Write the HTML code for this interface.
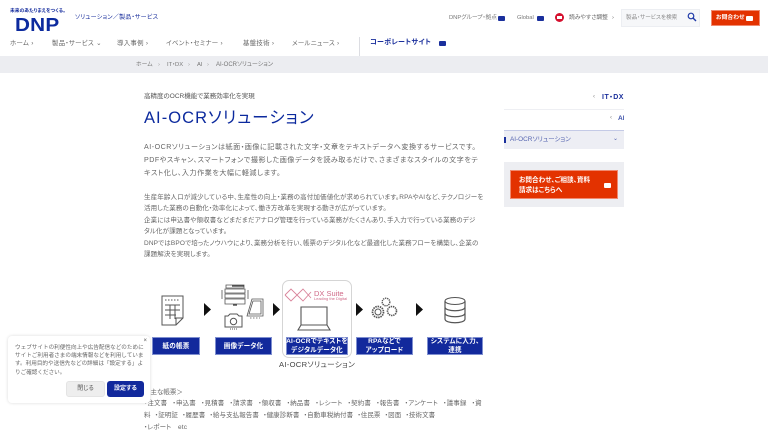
<!DOCTYPE html>
<html lang="ja"><head><meta charset="utf-8"><title>AI-OCRソリューション</title>
<style>
html,body{margin:0;padding:0;background:#fff}
#p{position:relative;width:768px;height:432px;overflow:hidden;background:#fff;font-family:"Liberation Sans","Noto Sans CJK JP",sans-serif;color:#555;font-feature-settings:"palt"}
.t{position:absolute;white-space:nowrap;line-height:1.2}
.b{position:absolute}
.ext{position:absolute;width:7px;height:5px;background:#1a2f9c;border-radius:1px}
.nav{font-size:6.4px;color:#666;top:40px;letter-spacing:.3px}
.body1{font-size:7.1px;left:144px;color:#666;letter-spacing:.5px}
.body2{font-size:6.5px;left:144px;color:#666;letter-spacing:.14px}
.lab{position:absolute;background:#12299c;border:1px solid #7f8fd0;box-sizing:border-box;color:#fff;font-size:6.6px;font-weight:bold;text-align:center;line-height:9px;padding-top:0;display:flex;align-items:center;justify-content:center;white-space:nowrap;letter-spacing:.2px}
</style></head><body><div id="p">
<div class="t" style="left:10px;top:9px;font-size:4.8px;color:#12299c;font-weight:bold">未来のあたりまえをつくる。</div>
<div class="t" style="left:15px;top:14px;font-size:18.5px;font-weight:bold;color:#0c2a9e;letter-spacing:.2px;transform:scaleX(1.12);transform-origin:left top">DNP</div>
<div class="t" style="left:75px;top:14.5px;font-size:6px;color:#1a2f9c;letter-spacing:.25px">ソリューション／製品・サービス</div>

<div class="t" style="left:449px;top:15px;font-size:5.8px;color:#777">DNPグループ・拠点</div><div class="ext" style="left:498px;top:16px"></div>
<div class="t" style="left:517px;top:15px;font-size:5.8px;color:#777">Global</div><div class="ext" style="left:537px;top:16px"></div>
<div class="b" style="left:555px;top:13px;width:9px;height:9px;border-radius:50%;background:#d5102e"></div>
<div class="b" style="left:557px;top:16px;width:5px;height:3px;background:#fff"></div>
<div class="t" style="left:569px;top:15px;font-size:5.8px;color:#666">読みやすさ調整</div>
<div class="t" style="left:612px;top:15px;font-size:5.8px;color:#666">›</div>
<div class="b" style="left:621px;top:9px;width:79px;height:18px;background:#f6f7f9;border:1px solid #eceef2;box-sizing:border-box"></div>
<div class="t" style="left:626px;top:15px;font-size:5.6px;color:#888">製品・サービスを検索</div>
<svg class="b" style="left:687px;top:12px" width="10" height="10" viewBox="0 0 10 10"><circle cx="4" cy="4" r="2.8" fill="none" stroke="#1f3aa8" stroke-width="1.2"/><path d="M6 6l3 3" stroke="#1f3aa8" stroke-width="1.4"/></svg>
<div class="b" style="left:711px;top:9.500px;width:49px;height:16.500px;background:#e33200;border:1px solid #f08a70;box-sizing:border-box"></div>
<div class="t" style="left:716px;top:15px;font-size:5.8px;font-weight:bold;color:#fff">お問合わせ</div><div class="ext" style="left:746px;top:16px;background:#fff"></div>

<div class="t nav" style="left:10px">ホーム ›</div>
<div class="t nav" style="left:52px">製品・サービス ⌄</div>
<div class="t nav" style="left:117px">導入事例 ›</div>
<div class="t nav" style="left:166px">イベント・セミナー ›</div>
<div class="t nav" style="left:243px">基盤技術 ›</div>
<div class="t nav" style="left:292px">メールニュース ›</div>
<div class="b" style="left:359px;top:37px;width:1px;height:19px;background:#dcdde2"></div>
<div class="t" style="left:370px;top:39px;font-size:7px;font-weight:bold;color:#1a2f9c;letter-spacing:.3px">コーポレートサイト</div><div class="ext" style="left:439px;top:41px"></div>

<div class="b" style="left:0;top:56px;width:768px;height:17px;background:#ecedf1"></div>
<div class="t" style="left:136px;top:61.500px;font-size:5.8px;color:#777">ホーム</div>
<div class="t" style="left:158px;top:61.500px;font-size:5.8px;color:#999">›</div>
<div class="t" style="left:167px;top:61.500px;font-size:5.8px;color:#777">IT・DX</div>
<div class="t" style="left:188px;top:61.500px;font-size:5.8px;color:#999">›</div>
<div class="t" style="left:197px;top:61.500px;font-size:5.8px;color:#777">AI</div>
<div class="t" style="left:207px;top:61.500px;font-size:5.8px;color:#999">›</div>
<div class="t" style="left:216px;top:61.500px;font-size:6px;color:#777">AI-OCRソリューション</div>

<div class="t" style="left:144px;top:92.500px;font-size:6.500px;color:#555">高精度のOCR機能で業務効率化を実現</div>
<div class="t" style="left:144px;top:108.500px;font-size:16.500px;color:#0c2a9e;letter-spacing:1.05px">AI-OCRソリューション</div>

<div class="t body1" style="top:143px">AI-OCRソリューションは紙面・画像に記載された文字・文章をテキストデータへ変換するサービスです。</div>
<div class="t body1" style="top:156px">PDFやスキャン、スマートフォンで撮影した画像データを読み取るだけで、さまざまなスタイルの文字をテ</div>
<div class="t body1" style="top:169px">キスト化し、入力作業を大幅に軽減します。</div>

<div class="t body2" style="top:193.500px">生産年齢人口が減少している中、生産性の向上・業務の高付加価値化が求められています。RPAやAIなど、テクノロジーを</div>
<div class="t body2" style="top:205px">活用した業務の自動化・効率化によって、働き方改革を実現する動きが広がっています。</div>
<div class="t body2" style="top:216.500px">企業には申込書や領収書などまだまだアナログ管理を行っている業務がたくさんあり、手入力で行っている業務のデジ</div>
<div class="t body2" style="top:228px">タル化が課題となっています。</div>
<div class="t body2" style="top:239.500px">DNPではBPOで培ったノウハウにより、業務分析を行い、帳票のデジタル化など最適化した業務フローを構築し、企業の</div>
<div class="t body2" style="top:251px">課題解決を実現します。</div>

<!-- diagram -->
<svg class="b" style="left:140px;top:275px" width="350" height="60" viewBox="0 0 350 60" fill="none" stroke="#555" stroke-width="1">
<path d="M22 21h21v22l-7 7H22zM36 50v-7h7M25 30h15M25 35h15M25 40h11M30 30v14M35 30v14"/>
<path d="M25 25h15" stroke-dasharray="1.5 1.5"/>
<path d="M64 28l7 6.500-7 6.500z" fill="#111" stroke="none"/>
<path d="M133 28l7 6.500-7 6.500z" fill="#111" stroke="none"/>
<path d="M216 28l7 6.500-7 6.500z" fill="#111" stroke="none"/>
<path d="M276 28l7 6.500-7 6.500z" fill="#111" stroke="none"/>
<path d="M86 10h18v3H86zM85 14h20v4H85zM85 19h20v4H85zM85 24h20v5H85z" stroke-width=".8"/>
<path d="M92 11h12M93 30h4" stroke="#333" stroke-width="1.200"/>
<path d="M82 15v9M108 15v9" stroke-width=".8"/>
<path d="M107 41l5-17h11v17zM109 39l4-13h8v13z" stroke-width=".8"/>
<path d="M110 43h10" stroke-dasharray="1.500 1.500" stroke-width=".8"/>
<path d="M85 41h3l2-2h7l2 2h3v11H85z"/><circle cx="93.500" cy="46.500" r="3.200"/>
<path d="M90 54h7" stroke-dasharray="1 1"/>
<circle cx="238" cy="37" r="5.500" stroke-dasharray="1.500 .8" stroke-width="1.700"/><circle cx="238" cy="37" r="3"/>
<circle cx="246" cy="27" r="3.800" stroke-dasharray="1.300 .8" stroke-width="1.400"/>
<circle cx="252" cy="36" r="4.500" stroke-dasharray="1.400 .8" stroke-width="1.600"/>
<ellipse cx="315" cy="26" rx="10" ry="3.500"/><path d="M305 26v18c0 5 20 5 20 0V26M305 32c0 5 20 5 20 0M305 38c0 5 20 5 20 0" stroke-width="1.200"/>
</svg>
<div class="b" style="left:282px;top:280px;width:70px;height:78px;border:1px solid #d5d5d5;border-radius:7px;box-sizing:border-box"></div>
<svg class="b" style="left:284px;top:287px" width="28" height="16" viewBox="0 0 28 16" fill="none" stroke="#d9839a" stroke-width=".9"><path d="M1 8L7 2L19 14L27 5M1 8L7 14L19 2L27 11"/></svg>
<svg class="b" style="left:297px;top:306px" width="34" height="26" viewBox="0 0 34 26" fill="none" stroke="#555" stroke-width="1.100"><path d="M4 1h26v18H4zM1 24l3-5h26l3 5z"/></svg>
<div class="t" style="left:314px;top:288.500px;font-size:7.500px;color:#d06a88">DX Suite</div>
<div class="t" style="left:314px;top:297px;font-size:4px;color:#d06a88">Leading the Digital</div>

<div class="lab" style="left:152px;top:337px;width:48px;height:18px"><span>紙の帳票</span></div>
<div class="lab" style="left:215px;top:337px;width:57px;height:18px"><span>画像データ化</span></div>
<div class="lab" style="left:286px;top:337px;width:62px;height:18px"><span>AI-OCRでテキストを<br>デジタルデータ化</span></div>
<div class="lab" style="left:356px;top:337px;width:57px;height:18px"><span>RPAなどで<br>アップロード</span></div>
<div class="lab" style="left:427px;top:337px;width:56px;height:18px"><span>システムに入力、<br>連携</span></div>
<div class="t" style="left:279px;top:360px;font-size:7.600px;color:#444;letter-spacing:.3px">AI-OCRソリューション</div>

<div class="t" style="left:144px;top:389px;font-size:6.500px;color:#666">＜主な帳票＞</div>
<div class="t body2" style="top:400px;word-spacing:3.300px">・注文書 ・申込書 ・見積書 ・請求書 ・領収書 ・納品書 ・レシート ・契約書 ・報告書 ・アンケート ・議事録 ・資</div>
<div class="t body2" style="top:412px;word-spacing:2.400px;letter-spacing:.08px">料 ・証明証 ・履歴書 ・給与支払報告書 ・健康診断書 ・自動車税納付書 ・住民票 ・図面 ・技術文書</div>
<div class="t body2" style="top:423.500px">・レポート　etc</div>

<!-- side nav -->
<div class="t" style="left:593px;top:94px;font-size:6px;color:#888">‹</div>
<div class="t" style="left:602px;top:93.500px;font-size:7px;font-weight:bold;color:#1a2f9c;letter-spacing:.5px;width:22px;overflow:hidden">IT・DX</div>
<div class="b" style="left:504px;top:109px;width:120px;height:1px;background:#eeeff3"></div>
<div class="t" style="left:610px;top:115px;font-size:6px;color:#888">‹</div>
<div class="t" style="left:618px;top:115px;font-size:6.500px;font-weight:bold;color:#3a4fa8;width:6px;overflow:hidden">AI</div>
<div class="b" style="left:504px;top:130px;width:120px;height:19px;background:#edeef4;border-top:1px solid #c4cae6;box-sizing:border-box"></div>
<div class="b" style="left:504px;top:137px;width:1.500px;height:6px;background:#1a2f9c"></div>
<div class="t" style="left:510px;top:136px;font-size:6.400px;color:#5665b0">AI-OCRソリューション</div>
<div class="t" style="left:613px;top:136px;font-size:6px;color:#5665b0">⌄</div>
<div class="b" style="left:504px;top:162px;width:120px;height:45px;background:#edeef2"></div>
<div class="b" style="left:510px;top:170px;width:108px;height:29px;background:#e33200;border:1px solid #f08a70;box-sizing:border-box"></div>
<div class="t" style="left:519px;top:175.500px;font-size:6.600px;font-weight:bold;color:#fff;line-height:10px">お問合わせ、ご相談、資料<br>請求はこちらへ</div>
<div class="b" style="left:604px;top:183px;width:7px;height:5px;background:#fff;border-radius:1px"></div>

<!-- cookie -->
<div class="b" style="left:8px;top:336px;width:142px;height:67px;background:#fff;border-radius:4px;box-shadow:0 0 3px rgba(0,0,0,.15)"></div>
<div class="t" style="left:143.500px;top:338px;font-size:6px;color:#555">×</div>
<div class="t" style="left:15px;top:344px;font-size:5.600px;color:#666;line-height:8.200px;font-feature-settings:normal">ウェブサイトの利便性向上や広告配信などのために<br>サイトご利用者さまの端末情報などを利用していま<br>す。利用目的や送信先などの詳細は「設定する」よ<br>りご確認ください。</div>
<div class="b" style="left:66px;top:381px;width:39px;height:16px;background:#eeeeee;border-radius:3px;border:1px solid #e4e4e4;box-sizing:border-box;font-size:6px;color:#555;text-align:center;line-height:14px">閉じる</div>
<div class="b" style="left:107px;top:381px;width:37px;height:16px;background:#12299c;border-radius:3px;box-sizing:border-box;font-size:6px;font-weight:bold;color:#fff;text-align:center;line-height:16px">設定する</div>
</div></body></html>
